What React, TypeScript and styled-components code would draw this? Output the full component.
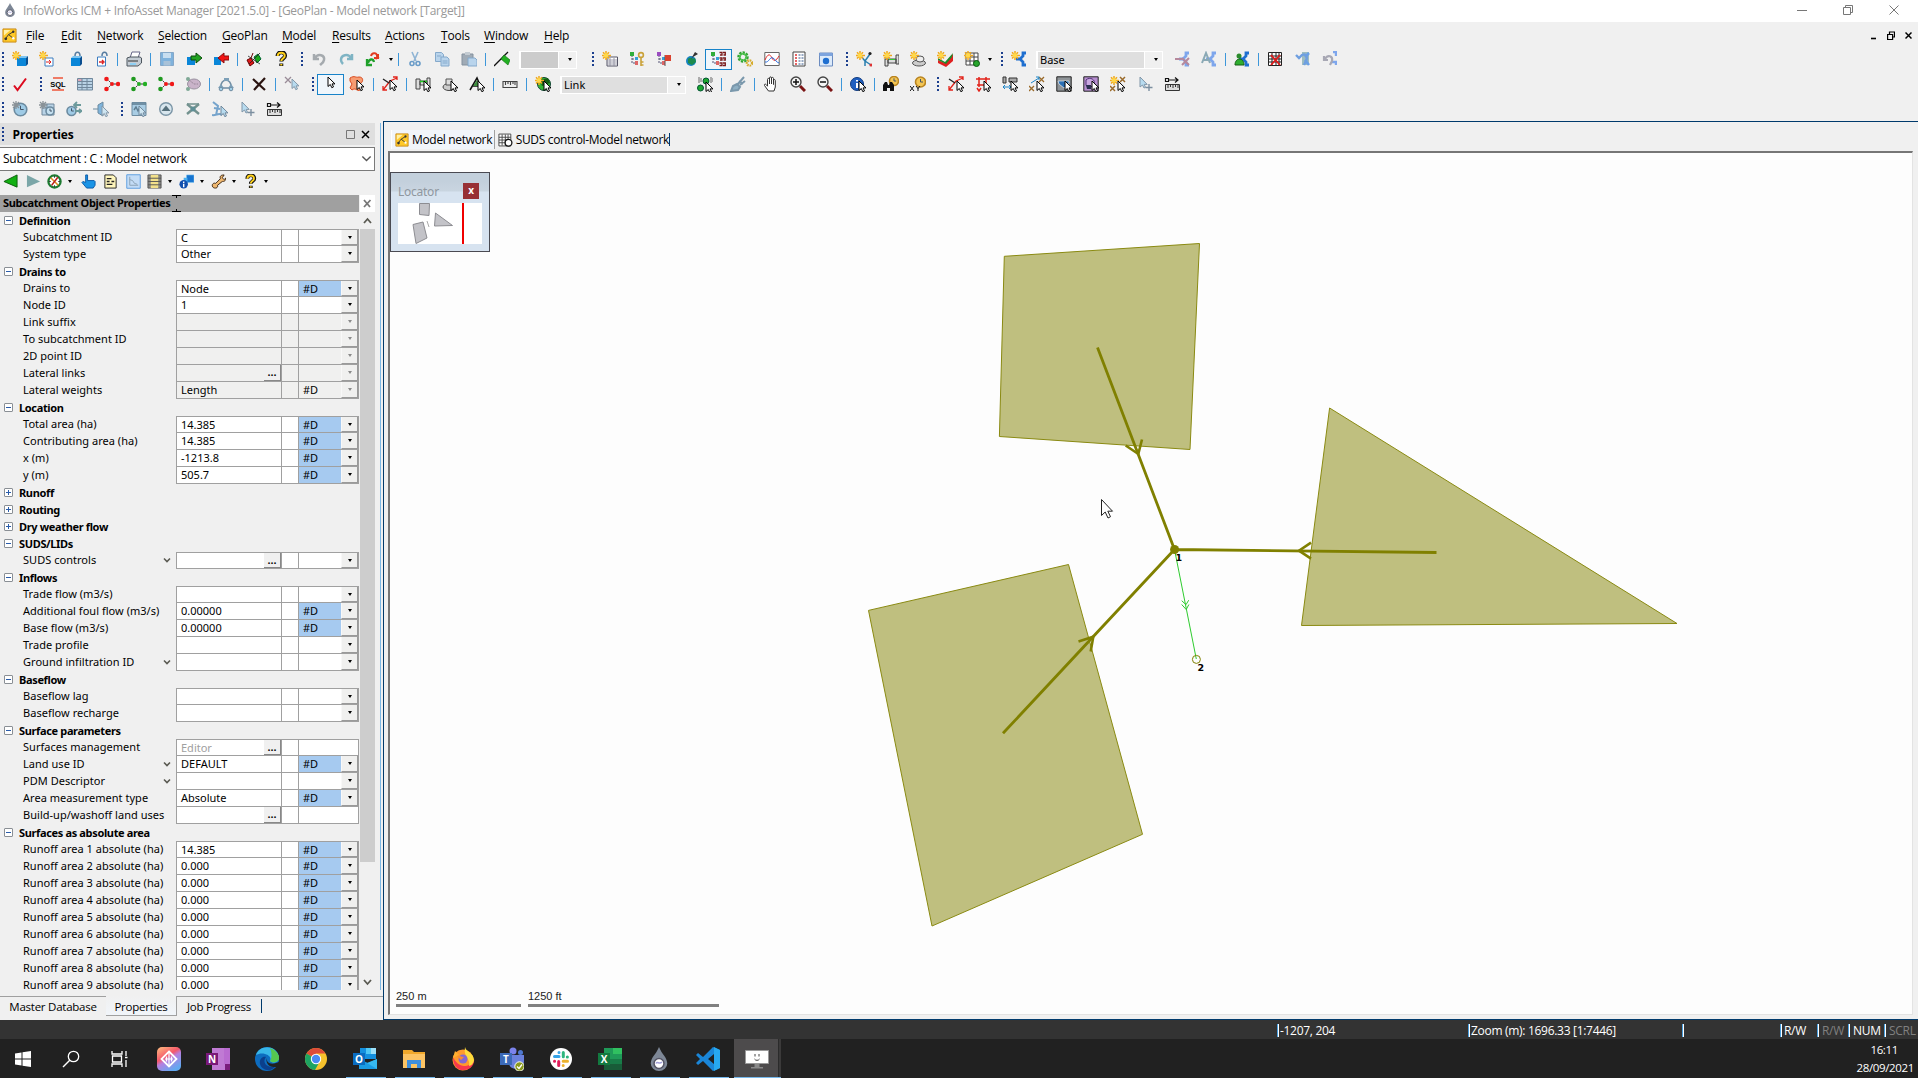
import React from "react";
import styled, { createGlobalStyle, css } from "styled-components";

const UI = `"Open Sans", "Noto Sans", sans-serif`;
const GRID = `"Noto Sans", "Open Sans", sans-serif`;

const Global = createGlobalStyle`
  * { box-sizing: border-box; }
  body { margin: 0; background: #f0f0f0; overflow: hidden; font-family: ${UI}; font-size: 12px; color: #000; }
`;

/* ---------- icon fragments, all on a 16 x 16 grid ---------- */

const Sun = () => (
  <g>
    <path d="M4 0v9M0 4.5h9M1 1.2l6 6.4M7 1.2L1 7.6" stroke="#f0a81c" strokeWidth="1.5" />
    <circle cx="4" cy="4.4" r="2.3" fill="#ffd84a" />
  </g>
);
const Arrow = ({ x = 8, y = 4, f = "#fff", s = "#000" }: { x?: number; y?: number; f?: string; s?: string }) => (
  <path d={`M${x} ${y}v9.5l2.3-2 1.5 3.2 1.7-.8-1.5-3h3z`} fill={f} stroke={s} strokeWidth="1" />
);
const Cube = ({ c = "#0a86d8" }: { c?: string }) => (
  <g>
    <path d="M5 7h9v8H5z" fill={c} />
    <path d="M5 7l2-2h9l-2 2z" fill="#7cc4f0" />
    <path d="M14 7l2-2v8l-2 2z" fill="#0a4f90" />
  </g>
);
const Tri = ({ a, b }: { a: string; b: string }) => (
  <g>
    <path d="M3 3l5 5h6M3 13l5-5" stroke="#333" fill="none" strokeDasharray="2 1" />
    <circle cx="2.5" cy="3" r="2.3" fill={a} />
    <circle cx="2.5" cy="13" r="2.3" fill={a} />
    <circle cx="8" cy="8" r="2" fill={b} />
    <circle cx="14" cy="8" r="2.2" fill={b} />
  </g>
);
const Net = ({ c = "#2f7fe0" }: { c?: string }) => (
  <path d="M15 2h-3v3l-3 3 3 3v3h3M9 8H5" stroke={c} strokeWidth="2.8" fill="none" />
);
const Tree = ({ c = "#2fae3c" }: { c?: string }) => (
  <g>
    <path d="M3 4v8h5M3 8h4" stroke="#557" fill="none" strokeDasharray="2 1" />
    <rect x="1" y="1" width="4" height="4" fill={c} />
    <rect x="6" y="6" width="3" height="3" fill="#37a0d8" />
    <rect x="6" y="10" width="3" height="4" fill="#d66" />
  </g>
);
const Lens = ({ plus }: { plus?: boolean }) => (
  <g>
    <path d="M10 10l5 5" stroke="#7a1414" strokeWidth="3" />
    <circle cx="6" cy="6" r="5" fill="#f4f4f4" stroke="#444" strokeWidth="1.4" />
    <path d={plus ? "M3 6h6M6 3v6" : "M3 6h6"} stroke="#111" strokeWidth="1.5" />
  </g>
);
const Clock = ({ f = "#9fcbe6", s = "#6c8ba0", x = 8.5, y = 8.5, r = 6.3 }: { f?: string; s?: string; x?: number; y?: number; r?: number }) => (
  <g>
    <circle cx={x} cy={y} r={r} fill={f} stroke={s} strokeWidth="1.6" />
    <path d={`M${x} ${y - r * 0.6}v${r * 0.6}h${r * 0.5}`} stroke="#456" fill="none" />
  </g>
);
const Ruler = () => (
  <g>
    <path d="M1.5 8.5h14v6h-14zM4 9v3M6.5 9v2M9 9v3M11.500 9v2M14 9v3" fill="#ddd" stroke="#333" />
    <path d="M1.5 2.500h3v3h-3zM5 4h9M11 1.500l3 2.500-3 2.500" fill="none" stroke="#111" strokeWidth="1.2" />
  </g>
);
const Question = ({ c = "#ffd21c" }: { c?: string }) => (
  <g fill="none">
    <path d="M4.500 5c0-5 8-5 7.500 0 0 2.500-3.700 2.500-3.700 5.500M8.300 12.500v2.500" stroke="#111" strokeWidth="4" />
    <path d="M4.700 5c0-4.500 7.500-4.500 7 0 0 2.500-3.400 2.500-3.400 5M8.300 13v1.500" stroke={c} strokeWidth="2" />
  </g>
);
const Lines = ({ c = "#e2231a" }: { c?: string }) => (
  <g stroke={c} fill="none" strokeWidth="1.300">
    <path d="M1 14L8 5l7-3M11 1h4v3M1 10v4h4" />
    <path d="M1 3l6 4" stroke="#222" />
  </g>
);

const icons: Record<string, React.ReactNode> = {
  newDb: <><Cube /><Sun /></>,
  newNet: <><path d="M6 7h8v8H6z" fill="#fff" stroke="#3b7cc0" /><path d="M7 11h5M10 9l2 2-2 2" stroke="#d22" fill="none" /><Sun /></>,
  openDb: <><Cube /><path d="M9 5c0-5 5-5 5 0" stroke="#557ba0" strokeWidth="1.500" fill="none" /></>,
  openNet: <><path d="M4.500 6h8v9h-8z" fill="#fff" stroke="#3b7cc0" /><path d="M6 11h4M9 9l2 2-2 2" stroke="#d22" strokeWidth="1.400" fill="none" /><path d="M9 5c0-5 5-5 5 0" stroke="#557ba0" strokeWidth="1.500" fill="none" /></>,
  print: <><path d="M4 7l2-6h8l-2 6z" fill="#fff" stroke="#668" /><path d="M1 7l3-1h10l1.500 1v5L12 15H1z" fill="#c4ccd4" stroke="#4d565e" /><path d="M2 10h10" stroke="#333" /><path d="M4 12h6v2H4z" fill="#8fd0f4" /></>,
  save: <><path d="M1.500 1.500h13v13h-13z" fill="#7fb2dc" stroke="#86a8c8" /><path d="M4 2h8v5H4z" fill="#c8def0" /><path d="M4.500 10h7v4.500h-7z" fill="#a9c2d8" /></>,
  commit: <><path d="M1 6h8v8H1z" fill="#0a86d8" /><path d="M5 5h5V2l6 5-6 5V9H5z" fill="#21a321" stroke="#0b4d0b" /></>,
  revert: <><path d="M1 6h7v8H1z" fill="#0a86d8" /><path d="M16 5h-5V2L5 7l6 5V9h5z" fill="#f01414" stroke="#8a0c0c" /></>,
  validate: <><path d="M1 9l4-2 3 5-4 3zM5 7l2-5" fill="#e01818" stroke="#600" /><path d="M8 6l4-3 3 5-4 4z" fill="#18a818" stroke="#063" /><path d="M3 13L14 2M2 5l12 8" stroke="#222" strokeWidth=".8" /></>,
  help: <Question />,
  undo: <path d="M3 3v5h5M4 7c3-5 10-3 9 2-.5 3-3 4-4 5" stroke="#a5aaae" strokeWidth="2.500" fill="none" />,
  redo: <path d="M14 3v5H9M13 7C10 2 3 4 3 9c0 2 1 3 2 4" stroke="#7fb4c4" strokeWidth="2.500" fill="none" />,
  redoAll: <><path d="M2 8v6h5M3 12c1-4 5-5 6-1" stroke="#1fa02a" strokeWidth="2.300" fill="none" /><path d="M6 5c1-4 7-4 6 2l2-1M9 7h4V3" stroke="#e23b20" strokeWidth="2" fill="none" /></>,
  cut: <><path d="M5 1l4 9M11 1L7 10" stroke="#8fb4d4" strokeWidth="1.600" /><circle cx="5" cy="12.500" r="2" fill="none" stroke="#6a9cc8" strokeWidth="1.600" /><circle cx="11" cy="12.500" r="2" fill="none" stroke="#6a9cc8" strokeWidth="1.600" /></>,
  copy: <g fill="#b9d4ec" stroke="#85a9cb"><path d="M1.500 1.500h6l2 2v7h-8z" /><path d="M7 6h6l2 2v7H7z" /><path d="M8.500 10h5M8.500 12h5M3 5h4" /></g>,
  paste: <><path d="M1 3h11v11H1z" fill="#a0abb6" stroke="#84919e" /><path d="M4 1h5v3H4z" fill="#c3cbd2" /><path d="M7 7h7l2 2v6H7z" fill="#b9d4ec" stroke="#85a9cb" /></>,
  flag: <><path d="M0 15L14 1" stroke="#111" strokeWidth="1.300" /><path d="M10 4l6 5-2 5-7-6z" fill="#22b022" stroke="#0c6b0c" strokeWidth=".6" /></>,
  newGrid: <><path d="M5 6h10.500v9H5z" fill="#fff" stroke="#556" /><path d="M5 9h10M5 11h10M5 13h10M8 7v8M12 7v8" stroke="#889" strokeWidth=".8" /><Sun /></>,
  treeKey: <><Tree /><circle cx="12" cy="4" r="2.400" fill="none" stroke="#caa23a" strokeWidth="1.600" /><path d="M12 6v9M12 11h2.500M12 14h2.500" stroke="#caa23a" strokeWidth="1.600" /></>,
  treeFlag: <><Tree c="#9a4cc0" /><path d="M9 15V4" stroke="#555" /><path d="M9 4h6v6H9z" fill="#d9432f" /></>,
  earth: <><circle cx="8" cy="10" r="5" fill="#1683c0" /><path d="M5 8c3-3 4 1 7-1l1 4-4 3-4-2z" fill="#1c8a4c" /><path d="M8 8l4-7 3 2-5 3z" fill="#333" /></>,
  treeNum: <><Tree /><path d="M9.500 1.500h2.500v2.500H10M9.500 7h2.500v2H10M9.500 12h2.500v2.500H9.500M13 1.500h2.300v2.500H13.500M13 7h2.300v2H13.500M13 12h2.300v2.500H13" stroke="#7a1a1a" strokeWidth="1.300" fill="none" /></>,
  gears: <><circle cx="6" cy="6" r="4" fill="none" stroke="#31a431" strokeWidth="3.400" strokeDasharray="2 1" /><circle cx="6" cy="6" r="3.300" fill="none" stroke="#4cc04c" strokeWidth="1.600" /><circle cx="12.500" cy="12" r="2.600" fill="none" stroke="#d7ac2c" strokeWidth="2.400" strokeDasharray="1.600 .8" /></>,
  chart: <><path d="M.8 1.500h14.400v13H.8z" fill="#fff" stroke="#666" /><path d="M1 9c3-7 5-6 7-2s4 3 7-2" stroke="#e02a2a" fill="none" /><path d="M1 11c4 1 5-6 8-4s3 4 6 5" stroke="#2a6ee0" fill="none" /></>,
  list: <><path d="M2 1h12v14H2z" fill="#fff" stroke="#444" /><path d="M4 4h2M4 7h2M4 10h2M4 13h2" stroke="#d33" strokeWidth="1.600" /><path d="M7.500 4H13M7.500 7H13M7.500 10H13M7.500 13H13" stroke="#358" strokeDasharray="2 1" /></>,
  viewer: <><path d="M1.500 2h13v13h-13z" fill="#dceafa" stroke="#6c8cc0" /><path d="M1.500 2h13v3h-13z" fill="#7da4de" /><circle cx="8" cy="10" r="3.200" fill="#1f6fd0" /></>,
  newLink: <><path d="M4 4l5 6 5-7M9 10v5M9 10l6 4" stroke="#2a7fb0" strokeWidth="1.500" fill="none" /><circle cx="14" cy="2.500" r="1.600" fill="#222" /><circle cx="15" cy="14" r="1.600" fill="#d33" /><Sun /></>,
  newPipe: <><path d="M2 8h3v7H2zM13 4h3v9h-3zM5 8h8v4H5z" fill="#ddd" stroke="#444" /><path d="M6 8.500h6" stroke="#3c3" /><Sun /></>,
  newMan: <><ellipse cx="9" cy="12" rx="6.500" ry="3" fill="#ccc" stroke="#555" /><ellipse cx="10" cy="8" rx="4" ry="3" fill="#eee" stroke="#555" /><Sun /></>,
  newPoly: <><path d="M1 9l7 3 8-9v7l-7 6-8-4z" fill="#e02020" /><path d="M1 7l7 4 8-9-1 4-6 7-8-4z" fill="#1f8a2a" /><Sun /></>,
  newTable: <><path d="M2 2h12v12H2zM2 6h12M2 10h12M6 2v12M10 2v12" fill="#fff" stroke="#444" /><circle cx="12.500" cy="12.500" r="3" fill="#27a52c" stroke="#0b5c10" /><Sun /></>,
  scen: <><Net c="#1f6fd0" /><Sun /></>,
  scenDel: <><Net c="#7ea6ec" /><path d="M1 8h7M8 7l7 7M15 7l-7 7" stroke="#b5889c" strokeWidth="2" /></>,
  scenA: <><Net c="#7ea6ec" /><path d="M1 12L5 2l4 10M2.500 9h5" stroke="#8aa9b5" strokeWidth="2" fill="none" /></>,
  scenUser: <><Net c="#1f6fd0" /><circle cx="5" cy="5" r="2.500" fill="#2c8c2c" /><path d="M1 14c0-8 9-8 9 0z" fill="#2fae2f" stroke="#145c14" /></>,
  gridDel: <><path d="M1.500 1.500h13v13h-13zM1.500 5h13M1.500 8h13M1.500 11h13M5 2v12M9 2v12M12 2v12" fill="#fff" stroke="#222" /><path d="M4 4l9 10M13 4L4 14" stroke="#e01818" strokeWidth="1.800" /></>,
  scenUndo: <><path d="M8 1h7v13H8z" fill="#9dbcc0" /><path d="M15 2l-4 4M11 9l4 5" stroke="#6aa0e8" strokeWidth="2.600" /><path d="M2 4l3 3 3-3c4-2 6 2 4 6l-2 4" stroke="#6f9fe0" strokeWidth="2.400" fill="none" /></>,
  scenUndo2: <><path d="M12 1h3v4M11 11h4v3" stroke="#7ea6ec" strokeWidth="2.400" fill="none" /><path d="M3 5v4h4M4 8c3-5 8-3 7 2l-2 4" stroke="#a8a8b4" strokeWidth="2.200" fill="none" /></>,
  check: <path d="M2 9.500l3.500 4.500L14 2.500" stroke="#dc0a1e" strokeWidth="2" fill="none" />,
  sql: <><path d="M3 2h10M2 14h12" stroke="#ef7b66" strokeWidth="2" /><text x="8" y="11" fontSize="7.500" fontWeight="700" textAnchor="middle" fontFamily="Liberation Sans, sans-serif" fill="#000">SQL</text></>,
  sheet: <><path d="M1 2h15v12H1z" fill="#b9d3e6" /><path d="M1 2h4v3H1z" fill="#d9a8b8" /><path d="M.5 2.500h15v11.500h-15zM.5 5.500h15M.5 8.500h15M.5 11.500h15M5 2v12M10 2v12" fill="none" stroke="#71889c" /></>,
  triR: <Tri a="#f01818" b="#f01818" />,
  triG: <Tri a="#1f9a1f" b="#23b023" />,
  triM: <Tri a="#1f9a1f" b="#f01818" />,
  cloud: <><ellipse cx="9" cy="8" rx="6.500" ry="5" fill="#c9b3c9" stroke="#9a92a0" /><circle cx="3" cy="3" r="2" fill="#7fa896" /><circle cx="3" cy="13" r="2" fill="#7fa896" /><path d="M4 4l5 4h4" stroke="#998899" strokeDasharray="2 1" fill="none" /></>,
  loop: <><path d="M3 11c-1-9 11-9 10 0M3 12h10" stroke="#6f8ca2" strokeWidth="1.500" fill="none" /><path d="M6 2h5v3H6zM0 12l3-4 3 4zM10 12l3-4 3 4z" fill="#7da0b8" /><circle cx="3" cy="13" r="1.800" fill="#9fd0ea" stroke="#6f8ca2" /><circle cx="13" cy="13" r="1.800" fill="#9fd0ea" stroke="#6f8ca2" /></>,
  del: <path d="M2 3l12 11M14 2L3 14" stroke="#2a1410" strokeWidth="2.200" />,
  delSel: <><path d="M1 1l6 6M7 1L1 7" stroke="#9a8c98" strokeWidth="1.300" /><Arrow x={8} y={3} f="#b8dcf0" s="#8598a8" /></>,
  select: <Arrow x={6} y={1} />,
  selPoly: <><path d="M1 2c5-3 5 0 9-1 5 0 4 5 2 6s2 5-1 7-4-3-8 0l-2-2 2-4-2-3z" fill="#f79c72" stroke="#d8481c" /><Arrow x={8} y={4} /></>,
  selLine: <><Lines /><Arrow x={8} y={4} /></>,
  selPipe: <><path d="M1 3h4v10H1zM12 2h3v9h-3zM5 5h7v4H5z" fill="#ddd" stroke="#444" /><path d="M5 5.500h7" stroke="#2c2" strokeWidth="1.500" /><Arrow x={9} y={5} /></>,
  selMan: <><ellipse cx="7" cy="11" rx="6" ry="3.500" fill="#ccc" stroke="#444" /><path d="M4 3h6v6H4z" fill="#ddd" stroke="#555" /><Arrow x={9} y={5} /></>,
  selTri: <><path d="M1 14L8 2l5 12M4 10h7" fill="none" stroke="#111" strokeWidth="1.500" /><path d="M4 10L8 4l2 6z" fill="#3c8c3c" /><Arrow x={9} y={5} /></>,
  measure: <path d="M1 5.500h14v6H1zM3.500 6v3M6 6v2M8.500 6v3M11 6v2M13 6v3" fill="#eee" stroke="#444" strokeWidth="1.100" />,
  theme: <><circle cx="9" cy="8" r="6.500" fill="#35b835" stroke="#114433" /><path d="M5 4l8-2 2 5-8 3z" fill="#145c14" /><Sun /><Arrow x={9} y={5} /></>,
  trace: <><circle cx="3.500" cy="12" r="3" fill="#1fa82f" stroke="#053" /><circle cx="9" cy="5" r="3" fill="#1fa82f" stroke="#053" /><path d="M2 1v6M4 2v4M14 1v6M16 2v4" stroke="#444" strokeWidth=".8" /><Arrow x={9} y={6} /></>,
  brush: <path d="M1 15l2-5 4-2 3 3-2 3zM8 8l6-7M10 9l5-4M9 5l4 3" fill="#8fb0c4" stroke="#7a98ac" strokeWidth="2" />,
  hand: <path d="M5.500 15L1.500 9.500c-.5-1.500 1-2 2-.5l1 1.200V3.500c0-1.500 1.800-1.500 2 0V8 2c0-1.500 2-1.500 2 0v6-5.500c0-1.500 2-1.500 2 0V8.500 4.500c0-1.300 1.800-1.300 1.800 0V11l-1.300 4z" fill="#fff" stroke="#333" />,
  zin: <Lens plus />,
  zout: <Lens />,
  info: <><circle cx="7" cy="8" r="6.500" fill="#1f5fc0" stroke="#123c80" /><path d="M7 4v1.500M7 7v5" stroke="#fff" strokeWidth="2" /><Arrow x={9} y={5} /></>,
  findClock: <><Clock f="#f4c552" s="#b98420" x={11} y={5} r={4.500} /><path d="M0 15V9l2-3h2l1 3h1l1-3h2l2 3v6H7v-3H4v3z" fill="#111" /></>,
  xyClock: <><Clock f="#f4c552" s="#b98420" x={10.500} y={6} r={5} /><path d="M0 10l4 5M4 10l-4 5M6 10l2 2.500L10 10M8 12v3" stroke="#111" fill="none" /></>,
  eLine: <><Lines /><Arrow x={9} y={5} /></>,
  eGrid: <><path d="M1 3h14M4 1v10M11 1v9M2 9h9M2 12l2 3 2-3" stroke="#e2231a" strokeWidth="1.500" fill="none" /><Arrow x={9} y={5} /></>,
  ePipe: <><path d="M1 1h3v6H1zM7 2h8v4H7z" fill="#aaa" stroke="#333" /><path d="M1 11h9M3 9l-2 2 2 2M7 9l2 2-2 2" stroke="#1b84c8" fill="none" /><Arrow x={9} y={5} /></>,
  eNode: <><path d="M0 10l5 5M5 10l-5 5M10 1l5 5M15 1l-5 5" stroke="#9a6a2a" strokeWidth="1.300" /><path d="M2 7l8-5M7 1h3v3" stroke="#1b84c8" fill="none" /><Arrow x={8} y={5} /></>,
  eSec: <><path d="M.8.800h14.400v14.400H.8z" fill="#8f9498" stroke="#222" /><path d="M2 5h11v2l-5 5-5-4z" fill="#2a6fb4" stroke="#fff" strokeWidth=".6" /><Arrow x={9} y={5} /></>,
  eSec2: <><path d="M.8.800h14.400v14.400H.8z" fill="#b78fd0" stroke="#222" /><path d="M3 4c4-4 10 0 8 4s-7 4-8 1z" fill="#c9a8e0" stroke="#52307a" /><path d="M3 9h5v4H4z" fill="#2b2f50" /><Arrow x={9} y={5} /></>,
  eNew: <><path d="M0 10l5 5M5 10l-5 5M10 1l5 5M15 1l-5 5" stroke="#9a6a2a" strokeWidth="1.500" /><Sun /><Arrow x={8} y={5} /></>,
  movePt: <><path d="M3 1v10l2.500-2 1.500 3 1.500-.6-1.300-3h3z" fill="#b8dcf0" stroke="#8196a8" /><path d="M12 8v7M8.500 11.500h7" stroke="#7c8fa0" strokeWidth="1.400" /></>,
  ruler: <Ruler />,
  clockA: <><Clock /><path d="M0 4h8M4 0v8M1 1l6 6M7 1L1 7" stroke="#8a9298" strokeWidth="1.300" /></>,
  clockB: <><path d="M3 3h12v11H3z" fill="#b9d3e6" stroke="#71889c" /><path d="M3 7h12M8 3v11" stroke="#71889c" /><Clock x={11} y={10} r={4} f="#c5e0f0" /><path d="M0 4h8M4 0v8M1 1l6 6M7 1L1 7" stroke="#8a9298" strokeWidth="1.300" /></>,
  clockC: <><Clock x={5.500} y={10} r={4.500} /><path d="M8 4h7M11 1L8 4l3 3M9 10h7M13 8l2.500 2-2.500 2" stroke="#6c9a9c" strokeWidth="1.800" fill="none" /></>,
  clockD: <><path d="M0 8h5V4l5-3v14l-5-3V8" fill="#7fb4dc" stroke="#6c8ba0" /><Arrow x={9} y={5} f="#cfe6f2" s="#8598a8" /></>,
  winSel: <><path d="M1 1.500h14v13H1z" fill="#a9cde4" stroke="#6c8ba0" /><path d="M1 3h14M3 9l2-3 2 4 2-4" stroke="#5d7c90" fill="none" strokeWidth="1.400" /><Arrow x={8} y={5} f="#cfe6f2" s="#71889c" /></>,
  up: <><circle cx="8" cy="8" r="6.300" fill="#d8e6ee" stroke="#7b95a6" strokeWidth="1.400" /><path d="M3.500 10L8 4.500l4.500 5.500z" fill="#56707c" /></>,
  junction: <><path d="M2 3l12 10M14 3L2 13" stroke="#73928f" strokeWidth="2.400" /><path d="M2 3h12" stroke="#73928f" strokeWidth="1.500" /><circle cx="8" cy="8" r="2.500" fill="#5f8f96" /></>,
  flowSel: <><path d="M1 1l5 4-2 9M0 14c4 1 7-3 10 0M2 7l6 1" stroke="#76a4cc" strokeWidth="2" fill="none" /><Arrow x={9} y={5} f="#b8dcf0" s="#71889c" /></>,
  geoplan: <><path d="M1 1h14v14H1z" fill="#ffc928" stroke="#c98a1a" /><path d="M2 2h7l-7 6z" fill="#fff0a8" /><path d="M4 11l3-4 5-3M7 7l5 4" stroke="#333" fill="none" /><circle cx="4" cy="11.500" r="1.500" fill="#333" /><circle cx="12" cy="4" r="1.300" fill="#333" /><circle cx="12" cy="11" r="1.300" fill="#fff" /></>,
  sudsGrid: <><path d="M1 1.500h13v13H1zM1 5h13M1 8h13M1 11h13M4.500 2v12M8 2v12M11 2v12" fill="#fff" stroke="#444" /><circle cx="11.500" cy="11" r="3.700" fill="#fff" stroke="#111" strokeWidth="1.400" /></>,
  drop: <><path d="M8 0C6 5 2.500 7 2.500 11a5.500 5 0 0 0 11 0C13.500 7 10 5 8 0z" fill="#7d8796" /><circle cx="8" cy="11" r="3.300" fill="#fff" stroke="#556" /><path d="M6 11c1-2 2 1 4-1" stroke="#a3a0d8" fill="none" /></>,
  prev: <path d="M15 1v13L1 8z" fill="#12b012" stroke="#0b5d0b" />,
  next: <path d="M1 1v13l14-6z" fill="#7ba6a8" />,
  compass: <><circle cx="8" cy="8" r="6.500" fill="#fff" stroke="#1c7a30" strokeWidth="2.400" /><path d="M4 4l8 8" stroke="#e08a1c" strokeWidth="1.600" /><path d="M11.500 3.500L5 12" stroke="#b22" strokeWidth="1.600" /><path d="M8 2v2M8 12v2M2 8h2M12 8h2" stroke="#333" /></>,
  point: <path d="M5 1h2v6h7l1 1v4l-2 3H6l-5-6 1-1 3 1z" fill="#1a94e6" stroke="#0a5aa8" />,
  notes: <><path d="M2 1h9l3 3v11H2z" fill="#fff6bc" stroke="#222" /><path d="M4 5h5M4 8h3M9 8h3M4 11h6" stroke="#222" strokeWidth="1.400" /></>,
  graph: <><path d="M.8.800h14.400v14.400H.8z" fill="#c3dcf6" stroke="#5b9de0" /><path d="M4 3v9h9M4 6l3 1 2 3 3 1" stroke="#8aa0b4" fill="none" /></>,
  film: <><path d="M1 1h14v14H1z" fill="#8a8a86" stroke="#555" /><path d="M4 1h8v14H4z" fill="#f2e08a" /><path d="M1 4.500h14M1 8h14M1 11.500h14" stroke="#555" /></>,
  infoCube: <><path d="M8 1h8v8H8z" fill="#1674d0" stroke="#7cc4f0" strokeWidth=".6" /><path d="M5 4h4v6H5z" fill="#4ab0f0" /><circle cx="5" cy="11" r="4.500" fill="#114fae" /><path d="M5 8v1.500M5 10.500v3.500" stroke="#fff" strokeWidth="1.500" /></>,
  wrench: <path d="M2 14c-2-3 1-5 3-4l5-5c-1-3 1-4 4-4l-2 3 2 2 2-2c0 4-3 4-4 4l-5 4c1 3-3 4-5 2z" fill="#f0b870" stroke="#3a2410" />,
};

/* ---------- shared toolbar parts ---------- */

const Slot = styled.div<{ $on?: boolean; $w?: number }>`
  width: ${(p) => p.$w ?? 27}px;
  height: 21px;
  flex: none;
  display: flex;
  align-items: center;
  justify-content: center;
  padding-bottom: 1px;
  ${(p) => p.$on && css`background: #f0f6fb; border: 1px solid #1883c9;`}
`;
const Grip = styled.i<{ $w: number }>`
  width: ${(p) => p.$w}px;
  height: 15px;
  flex: none;
  background: repeating-linear-gradient(#1c3f8e 0 2px, transparent 2px 4px) right 3px top / 2px 15px no-repeat;
`;
const Sep = styled.i`
  width: 6px;
  height: 13px;
  flex: none;
  background: linear-gradient(#3d97da, #3d97da) center / 1px 13px no-repeat;
`;
const Caret = styled.i<{ $c?: string; $w?: number }>`
  width: ${(p) => p.$w ?? 9}px;
  flex: none;
  display: flex;
  justify-content: center;
  &::after {
    content: "";
    border: 2.5px solid transparent;
    border-top: 3px solid ${(p) => p.$c ?? "#000"};
    border-bottom: 0;
  }
`;
const Combo = styled.div<{ $w: number; $l: number; $r: number; $fill: string }>`
  width: ${(p) => p.$w}px;
  height: 18px;
  margin: 0 ${(p) => p.$r}px 0 ${(p) => p.$l}px;
  flex: none;
  display: flex;
  align-items: center;
  border: 1px solid #fff;
  background: #f0f0f0;
  span {
    flex: 1;
    height: 16px;
    padding-left: 2px;
    margin-right: 4px;
    line-height: 16px;
    font-size: 11px;
    border: 1px solid #fff;
    border-width: 0 1px;
    font-family: ${GRID};
    background: ${(p) => p.$fill};
  }
`;

type Item = string | ["grip" | "arrow", number] | ["combo", number, number, number, string, string] | ["on", string];

const Icon = ({ name, size = 16 }: { name: string; size?: number }) => (
  <svg width={size} height={size} viewBox="0 0 16 16" aria-hidden>{icons[name]}</svg>
);

const ToolRow = styled.div`
  height: 25px;
  display: flex;
  align-items: center;
`;
const Toolbar = ({ items }: { items: Item[] }) => (
  <ToolRow>
    {items.map((it, i) => {
      if (it === "|") return <Sep key={i} />;
      if (typeof it === "string") return <Slot key={i}><Icon name={it} /></Slot>;
      if (it[0] === "grip") return <Grip key={i} $w={it[1]} />;
      if (it[0] === "arrow") return <Caret key={i} $w={it[1]} />;
      if (it[0] === "on") return <Slot key={i} $on><Icon name={it[1]} /></Slot>;
      if (it[0] === "combo")
        return <Combo key={i} $l={it[1]} $w={it[2]} $r={it[3]} $fill={it[4]}><span>{it[5]}</span><Caret $w={13} /></Combo>;
      return null;
    })}
  </ToolRow>
);

const row1: Item[] = [["grip", 6.5], "newDb", "newNet", "openDb", "openNet", "|", "print", "|", "save", "commit", "revert", "|", "validate", "help",
  ["grip", 11], "undo", "redo", "redoAll", ["arrow", 9], "|", "cut", "copy", "paste", "|", "flag", ["combo", 3.5, 58, 0, "#cccccc", ""],
  ["grip", 19.5], "newGrid", "treeKey", "treeFlag", "earth", ["on", "treeNum"], "gears", "chart", "list", "viewer",
  ["grip", 11], "newLink", "newPipe", "newMan", "newPoly", "newTable", ["arrow", 9], ["grip", 11], "scen",
  ["combo", 3.5, 127, 5, "#dfdfdf", "Base"], "scenDel", "scenA", "|", "scenUser", "|", "gridDel", "scenUndo", "scenUndo2"];
const row2: Item[] = [["grip", 6.5], "check", ["grip", 11], "sql", "sheet", "triR", "triG", "triM", "cloud", "|", "loop", "|", "del", "|", "delSel",
  ["grip", 11], ["on", "select"], "selPoly", "|", "selLine", "|", "selPipe", "selMan", "selTri", "|", "measure", "|", "theme",
  ["combo", 3.5, 126, 5, "#dfdfdf", "Link"], "trace", "|", "brush", "|", "hand", "zin", "zout", "|", "info", "|", "findClock", "xyClock",
  ["grip", 11], "eLine", "eGrid", "ePipe", "eNode", "eSec", "eSec2", "eNew", "movePt", "ruler"];
const row3: Item[] = [["grip", 6.5], "clockA", "clockB", "clockC", "clockD", ["grip", 11], "winSel", "up", "junction", "flowSel", "movePt", "ruler"];

/* ---------- frame ---------- */

const Screen = styled.div`
  width: 1918px;
  height: 1078px;
  display: flex;
  flex-direction: column;
  background: #f0f0f0;
`;
const TitleBar = styled.header`
  height: 22px;
  background: #fff;
  color: #999;
  display: flex;
  align-items: center;
  padding: 0 19px 2px 3px;
  font-size: 12px;
  letter-spacing: -0.28px;
  white-space: nowrap;
  span { flex: 1; padding-left: 6px; }
`;
const WinButtons = styled.div<{ $gap: number }>`
  display: flex;
  align-items: center;
  gap: ${(p) => p.$gap}px;
`;
const MenuBar = styled.nav`
  height: 25px;
  display: flex;
  align-items: center;
  gap: 16px;
  padding: 1px 6px 0 2px;
  font-size: 12px;
  letter-spacing: -0.2px;
  > svg { margin-right: -7px; }
  > div { margin-left: auto; }
`;
const MenuItem = styled.a<{ $w: number }>`
  width: ${(p) => p.$w}px;
  white-space: nowrap;
  u { text-underline-offset: 2px; }
`;
const menus: [string, number][] = [["File", 19], ["Edit", 20], ["Network", 45], ["Selection", 48], ["GeoPlan", 44], ["Model", 34], ["Results", 37], ["Actions", 40], ["Tools", 27], ["Window", 44], ["Help", 30]];

const Tools = styled.div`height: 74px;`;
const Work = styled.main`
  height: 899px;
  display: flex;
`;

/* ---------- properties panel ---------- */

const Side = styled.section`
  width: 383px;
  padding-top: 2px;
  display: flex;
  flex-direction: column;
`;
const SideMain = styled.div`
  height: 867px;
  width: 381px;
  padding-right: 5px;
  border-right: 1px solid #7cb8e6;
  display: flex;
  flex-direction: column;
`;
const PanelHead = styled.div`
  height: 22px;
  flex: none;
  background: #dfdfdf;
  display: flex;
  align-items: center;
  padding-right: 5px;
  b { flex: 1; padding-left: 6px; font-size: 12px; letter-spacing: -0.15px; }
  svg { margin-left: 6px; }
`;
const ObjectSelect = styled.div`
  height: 24px;
  flex: none;
  margin-top: 2px;
  border: 1px solid #7a7a7a;
  border-left: 0;
  background: #fff;
  display: flex;
  align-items: center;
  justify-content: space-between;
  padding: 0 2px 1px 3px;
  font-size: 12px;
  letter-spacing: -0.23px;
`;
const PanelTools = styled.div`
  height: 24px;
  flex: none;
  display: flex;
  align-items: center;
  padding: 0 0 3px 3px;
`;
const ToolGap = styled.div<{ $r: number }>`
  display: flex;
  align-items: center;
  margin-right: ${(p) => p.$r}px;
`;
const SubHead = styled.div`
  height: 17px;
  flex: none;
  display: flex;
  b {
    width: 359px;
    padding-left: 3px;
    display: flex;
    background: #a0a0a0;
    font: 700 11px/16px ${GRID};
    letter-spacing: -0.35px;
    white-space: nowrap;
  }
  span {
    margin-left: 1px;
    width: 15px;
    background: #fff;
    display: flex;
    align-items: center;
    justify-content: center;
  }
`;
const IBeam = styled.i`
  width: 9px;
  height: 17px;
  margin: 0 178px 0 auto;
  background: linear-gradient(#000, #000) top / 9px 1px no-repeat, linear-gradient(#000, #000) bottom / 9px 1px no-repeat,
    linear-gradient(#000, #000) top / 1px 3px no-repeat, linear-gradient(#000, #000) bottom / 1px 3px no-repeat;
`;
const GridWrap = styled.div`
  height: 780px;
  display: flex;
  overflow: hidden;
`;
const Rows = styled.div`width: 359px; flex: none;`;
const Section = styled.div`
  height: 17px;
  display: flex;
  align-items: center;
  padding: 0 0 1px 4px;
  font: 700 11px/15px ${GRID};
  letter-spacing: -0.35px;
  i {
    width: 9px; height: 9px;
    margin: 1px 6px 0 0;
    border: 1px solid #8a8f95;
    border-radius: 1px;
    background:
      linear-gradient(#2a5caa, #2a5caa) center / 5px 1px no-repeat, #fff;
  }
  i[data-closed="true"] {
    background:
      linear-gradient(#2a5caa, #2a5caa) center / 5px 1px no-repeat,
      linear-gradient(#2a5caa, #2a5caa) center / 1px 5px no-repeat, #fff;
  }
`;
const Row = styled.div`
  height: 17px;
  display: flex;
  font: 11px/14px ${GRID};
  white-space: nowrap;
`;
const Name = styled.label`
  width: 176px;
  padding: 0 5px 2px 23px;
  display: flex;
  justify-content: space-between;
  align-items: center;
  line-height: 15px;
  letter-spacing: 0.03px;
`;
/* The first line of a group is one pixel shorter; the lines under it move up to meet it. */
const Cells = styled.div<{ $off?: boolean; $first?: boolean; $last?: boolean }>`
  width: 183px;
  height: ${(p) => (p.$first ? 16 : 17) + (p.$last ? 1 : 0)}px;
  margin-top: ${(p) => (p.$first ? 0 : -1)}px;
  line-height: ${(p) => (p.$first ? 16 : 15)}px;
  flex: none;
  display: flex;
  border: 1px solid #a0a0a0;
  border-bottom-width: ${(p) => (p.$last ? 1 : 0)}px;
  background: ${(p) => (p.$off ? "#f0f0ef" : "#fff")};
`;
const Value = styled.span<{ $ph?: boolean }>`
  width: 105px;
  padding-left: 4px;
  border-right: 1px solid #a0a0a0;
  display: flex;
  justify-content: space-between;
  ${(p) => p.$ph && css`color: #a0a0a0;`}
`;
const More = styled.b`
  width: 17px;
  background: #f0f0f0;
  border-right: 1px solid #888;
  border-bottom: 1px solid #888;
  color: #000;
  text-align: center;
  line-height: 14px;
  font-weight: 600;
`;
const Gap = styled.span`width: 17px; border-right: 1px solid #a0a0a0;`;
const Flag = styled.span<{ $hl?: boolean }>`
  width: 42px;
  padding-left: 4px;
  ${(p) => p.$hl && css`background: #a6caf0;`}
`;
const Drop = styled.span`
  width: 17px;
  display: flex;
  align-items: center;
  justify-content: center;
  background: #f0f0ef;
  border-left: 1px solid #f8f8f8;
  border-bottom: 1px solid #9a9a9a;
  border-right: 1px solid #9a9a9a;
`;
const Scroll = styled.div`
  width: 15px;
  margin-left: 1px;
  display: flex;
  flex-direction: column;
  align-items: center;
  background: #f0f0f0;
  i { width: 15px; height: 633px; background: #cdcdcd; }
  svg { flex: none; }
  div { flex: 1; }
`;
const Chevron = ({ w = 8, t = 1.6, c = "#5a5a52" }: { w?: number; t?: number; c?: string }) => (
  <svg width={w} height={w} viewBox="0 0 8 8"><path d="M1 2.500l3 3 3-3" stroke={c} strokeWidth={t} fill="none" /></svg>
);

const TabsLine = styled.div`
  height: 30px;
  padding-top: 6px;
  display: flex;
  background: linear-gradient(#a0a0a0, #a0a0a0) 0 6px / 100% 1px no-repeat;
`;
const BottomTab = styled.div<{ $w: number; $on?: boolean }>`
  width: ${(p) => p.$w}px;
  height: 20px;
  text-align: center;
  font-size: 11.500px;
  letter-spacing: -0.25px;
  line-height: 21px;
  white-space: nowrap;
  ${(p) => p.$on && css`background: linear-gradient(#f0f0f0, #f1f5fa); border-right: 1px solid #a0a0a0; border-bottom: 1px solid #a0a0a0;`}
`;
const Tick = styled.i<{ $h: number; $t?: number }>`
  width: 1px;
  height: ${(p) => p.$h}px;
  margin-top: ${(p) => p.$t ?? 0}px;
  background: #003a6c;
`;

type R = [name: string, value?: string, flag?: string, opt?: string];
/* opt letters: o = disabled, m = "..." button, x = no drop-down, c = chevron beside the name, p = placeholder */
const sections: { title: string; closed?: boolean; rows?: R[] }[] = [
  { title: "Definition", rows: [["Subcatchment ID", "C"], ["System type", "Other"]] },
  { title: "Drains to", rows: [["Drains to", "Node", "#D"], ["Node ID", "1"], ["Link suffix", "", "", "o"], ["To subcatchment ID", "", "", "o"], ["2D point ID", "", "", "o"], ["Lateral links", "", "", "om"], ["Lateral weights", "Length", "#D", "o"]] },
  { title: "Location", rows: [["Total area (ha)", "14.385", "#D"], ["Contributing area (ha)", "14.385", "#D"], ["x (m)", "-1213.8", "#D"], ["y (m)", "505.7", "#D"]] },
  { title: "Runoff", closed: true },
  { title: "Routing", closed: true },
  { title: "Dry weather flow", closed: true },
  { title: "SUDS/LIDs", rows: [["SUDS controls", "", "", "mc"]] },
  { title: "Inflows", rows: [["Trade flow (m3/s)"], ["Additional foul flow (m3/s)", "0.00000", "#D"], ["Base flow (m3/s)", "0.00000", "#D"], ["Trade profile"], ["Ground infiltration ID", "", "", "c"]] },
  { title: "Baseflow", rows: [["Baseflow lag"], ["Baseflow recharge"]] },
  { title: "Surface parameters", rows: [["Surfaces management", "Editor", "", "mxp"], ["Land use ID", "DEFAULT", "#D", "c"], ["PDM Descriptor", "", "", "c"], ["Area measurement type", "Absolute", "#D"], ["Build-up/washoff land uses", "", "", "mx"]] },
  { title: "Surfaces as absolute area", rows: Array.from({ length: 9 }, (_, i): R => [`Runoff area ${i + 1} absolute (ha)`, i ? "0.000" : "14.385", "#D"]) },
];

const Property = ({ r: [name, value = "", flag = "", opt = ""], first, last }: { r: R; first: boolean; last: boolean }) => (
  <Row>
    <Name>{name}{opt.includes("c") && <Chevron />}</Name>
    <Cells $off={opt.includes("o")} $first={first} $last={last}>
      <Value $ph={opt.includes("p")}>{value}<span />{opt.includes("m") && <More>...</More>}</Value>
      <Gap />
      <Flag $hl={!!flag && !opt.includes("o")}>{flag}</Flag>
      {!opt.includes("x") && <Drop><Caret $c={opt.includes("o") ? "#8a8a8a" : "#000"} /></Drop>}
    </Cells>
  </Row>
);

/* ---------- map window ---------- */

const Mdi = styled.section`
  flex: 1;
  border-left: 1px solid #003a6c;
  border-top: 1px solid #003a6c;
  border-bottom: 1px solid #003a6c;
  padding: 0 5px 4px 4px;
  display: flex;
  flex-direction: column;
`;
const DocTabs = styled.div`
  height: 29px;
  padding: 8px 0 0 3px;
  display: flex;
`;
const DocTab = styled.div<{ $on?: boolean; $w: number; $gap: number }>`
  height: 19px;
  width: ${(p) => p.$w}px;
  display: flex;
  align-items: center;
  gap: ${(p) => p.$gap}px;
  padding-left: 3px;
  white-space: nowrap;
  font-size: 12px;
  letter-spacing: -0.32px;
  ${(p) => p.$on && css`background: #f1f5fa; border-right: 1px solid #a0a0a0; border-left: 1px solid #fff;`}
`;
const Canvas = styled.div`
  position: relative;
  flex: 1;
  background: #fdfdfd;
  border: 1px solid #e3e3e3;
  border-left: 2px solid #767676;
  border-top: 2px solid #767676;
  > svg { display: block; }
`;
const Locator = styled.div`
  position: absolute;
  left: 0;
  top: 19px;
  width: 100px;
  height: 80px;
  border: 1px solid #4a4a52;
  background: linear-gradient(#c3d0dc 0 8px, #c9d5e0 18px, #d7e3f0 19px);
  padding: 10px 7px 7px;
`;
const LocHead = styled.div`
  height: 20px;
  display: flex;
  justify-content: space-between;
  padding-right: 3px;
  color: #8f979f;
  font: 12px/18px ${GRID};
  letter-spacing: -0.25px;
  b { width: 16px; height: 16px; background: #983034; color: #fff; text-align: center; font: 700 10px/14px ${GRID}; }
`;
const Scale = styled.div`
  position: absolute;
  left: 6px;
  bottom: 7px;
  display: flex;
  gap: 7px;
`;
const ScaleBar = styled.div<{ $w: number }>`
  width: ${(p) => p.$w}px;
  border-bottom: 3px solid #808080;
  font: 11px/15px "Liberation Sans", Arial, sans-serif;
  color: #222;
`;
const polys = ["1004.3,256.3 1199.5,243.5 1190,449.5 999.4,436.5", "1329.6,408 1677,623.5 1301.5,625.5", "868.5,610.4 1068.5,564.5 1142.5,834.3 932,926"];

/* ---------- status bar and taskbar ---------- */

const Status = styled.footer`
  height: 19px;
  background: #333;
  color: #fff;
  display: flex;
  justify-content: flex-end;
  font-size: 12px;
  line-height: 19px;
  letter-spacing: -0.3px;
`;
const StatusCell = styled.div<{ $w: number; $p?: number; $dim?: boolean }>`
  width: ${(p) => p.$w}px;
  height: 17px;
  margin-top: 2px;
  line-height: 18px;
  padding-left: ${(p) => p.$p ?? 3}px;
  white-space: nowrap;
  background: linear-gradient(90deg, #4aa0e0 1px, #fff 1px) left / 2px 13px no-repeat;
  ${(p) => p.$dim && css`color: #808080;`}
`;
const Taskbar = styled.footer`
  height: 39px;
  background: #212121;
  display: flex;
`;
const Task = styled.div<{ $run?: boolean; $active?: boolean }>`
  width: 49px;
  display: flex;
  align-items: center;
  justify-content: center;
  &:first-child { width: 46px; }
  ${(p) => p.$run && css`background: linear-gradient(#76b9ed, #76b9ed) 6px 38px / 40px 1px no-repeat;`}
  ${(p) => p.$active && css`background: linear-gradient(#76b9ed, #76b9ed) 2px 38px / 47px 1px no-repeat, linear-gradient(90deg, #4d4b4c 44px, #2b2b2b 44px 45px, #3b3a3a 45px) 2px 0 no-repeat;`}
`;
const ClockBox = styled.div`
  margin-left: auto;
  width: 70px;
  color: #fff;
  font-size: 11.500px;
  letter-spacing: -0.35px;
  line-height: 18px;
  padding: 2px 4px 0 0;
  white-space: nowrap;
  display: flex;
  flex-direction: column;
  align-items: flex-end;
  span:first-child { padding-right: 16px; }
`;

const Letter = ({ x, y, s, children }: { x: number; y: number; s: number; children: string }) => (
  <text x={x} y={y} fontSize={s} fontWeight="700" fill="#fff" textAnchor="middle" fontFamily="Open Sans, sans-serif">{children}</text>
);
const tasks: React.ReactNode[] = [
  <path d="M4 6.500l6.500-1v6H4zM11.500 5.300L20 4v7.500h-8.500zM4 12.500h6.500v6L4 17.500zM11.500 12.500H20V20l-8.500-1.300z" fill="#fff" />,
  <><circle cx="14.500" cy="9.500" r="5.200" fill="none" stroke="#fff" strokeWidth="1.300" /><path d="M11 13l-7 7" stroke="#fff" strokeWidth="1.500" /></>,
  <path d="M4 4v3h10V4M4 20v-3h10v3M4.500 9h9v6h-9zM18 4v5M18 13v7M17 10.500h2.500" stroke="#fff" strokeWidth="1.300" fill="none" />,
  <><defs><linearGradient id="a" x1="0" y1="0" x2=".6" y2="1"><stop offset="0" stopColor="#ffc080" /><stop offset=".45" stopColor="#f5586a" /><stop offset=".6" stopColor="#b580e0" /><stop offset="1" stopColor="#62a8f0" /></linearGradient></defs><rect width="24" height="24" rx="5" fill="url(#a)" /><path d="M12 4.500l7.500 7.500-7.500 7.500L4.500 12z" fill="none" stroke="#fff" strokeWidth="1.800" /><path d="M8 12h8M12 6v12M9.500 9.500v5M14.500 9.500v5" fill="none" stroke="#fff" strokeWidth="1.200" /></>,
  <><path d="M6 1h18v22H6z" fill="#c07ad4" /><path d="M19 17h5v6h-5z" fill="#7a1c7c" /><path d="M18 1h6v16h-6z" fill="#b96bd0" /><path d="M0 6h12v12H0z" fill="#7a1878" /><Letter x={6} y={15.500} s={10}>N</Letter></>,
  <><circle cx="12" cy="12" r="12" fill="#0d6cbf" /><path d="M1 8C4-2 21-3 24 10c0 6-6 7-9 4 3-6-8-10-14-6z" fill="#38b6e8" /><path d="M15 1c6 2 10 7 9 11-1 4-7 4-9 2 2-3 2-8 0-13z" fill="#56c850" /><path d="M11 10c-4 5 0 11 9 10-4 5-13 4-15-3-1-4 2-8 6-7z" fill="#0b3f8c" /><path d="M12 11c-1 4 3 7 9 5l3-1v5h-4c-6 1-10-5-8-9z" fill="#212121" /></>,
  <><circle cx="12" cy="12" r="11" fill="#f6c12c" /><path d="M12 12L2.500 6.500A11 11 0 0 1 21.500 6.500H12z" fill="#dd4b39" /><path d="M12 12l-9.500-5.500A11 11 0 0 0 11 23l5-9z" fill="#1da462" /><circle cx="12" cy="12" r="5.200" fill="#fff" /><circle cx="12" cy="12" r="4.200" fill="#4a8af4" /></>,
  <><path d="M7 1h16v11H7z" fill="#1490df" /><path d="M13 1h5v6h-5z" fill="#50c8f4" /><path d="M18 1h5v6h-5z" fill="#9be0fa" /><path d="M6 12l9 4 9-4v10H6z" fill="#1a9be4" /><path d="M24 12v10L14 16z" fill="#36b8f0" /><path d="M0 6h12v12H0z" fill="#0a6cc0" /><Letter x={6} y={15.500} s={10}>O</Letter></>,
  <><path d="M1 3h9l2 2h11v16H1z" fill="#f0a82c" /><path d="M1 7h22v14H1z" fill="#fcc464" /><path d="M5 21v-8h14v8h-4v-4H9v4z" fill="#3f8fdc" /></>,
  <><circle cx="12" cy="13" r="10.500" fill="#ff9a2c" /><path d="M2 10c0 10 6 14 11 13 7 0 11-6 10-12-2 7-6 8-10 8S4 15 2 10z" fill="#f8384c" /><path d="M14 0c1 5 9 6 9 13 0 3-3 6-5 6 2-7-6-9-4-19z" fill="#fddc3c" /><path d="M2 11l2-7 4 4z" fill="#ffb030" /><circle cx="12" cy="12" r="4.500" fill="#8468d0" /><path d="M6 9c3-1 4 1 7 1l-3 3z" fill="#fb8c2c" /></>,
  <><circle cx="13" cy="4" r="3.500" fill="#7b83eb" /><circle cx="20.500" cy="5.500" r="2.500" fill="#4f78d0" /><path d="M9 8h9v13c-6 2-9-2-9-5zM17 8h7v7c0 4-5 5-7 3z" fill="#6a80dc" /><path d="M0 6h12v12H0z" fill="#3c6ab8" /><Letter x={6} y={15.500} s={10}>T</Letter><circle cx="19.500" cy="19.500" r="4.700" fill="#8a9a1c" stroke="#fff" /><path d="M17 19.500l2 2 3-4" stroke="#fff" strokeWidth="1.300" fill="none" /></>,
  <><circle cx="12" cy="12" r="11" fill="#fff" /><g strokeWidth="3" strokeLinecap="round"><path d="M10 5.500v.1M5.500 9.500h4.500" stroke="#36a4e8" /><path d="M14.300 5.500v4.300M18.300 10h.1" stroke="#2eb67d" /><path d="M9.700 14.500v4M5.500 14.300h.1" stroke="#e01e5a" /><path d="M14.200 14.300h4.300M14.200 18.500v.1" stroke="#ecb22e" /></g></>,
  <><path d="M6 1h18v22H6z" fill="#1f9a58" /><path d="M15 1h9v6h-9z" fill="#30c060" /><path d="M6 12h18v6H6z" fill="#187c48" /><path d="M6 17h18v6H6z" fill="#185c38" /><path d="M0 6h12v12H0z" fill="#12793f" /><Letter x={6} y={15.500} s={10}>X</Letter></>,
  <g transform="scale(1.5)">{icons.drop}</g>,
  <><path d="M17 0l7 3v18l-7 3L7 14l-5 4-2-2 4-4-4-4 2-2 5 4zM18 7l-6 5 6 5z" fill="#1a86d8" fillRule="evenodd" /><path d="M18 0l6 3v18l-6 3z" fill="#27a8f0" /></>,
  <><path d="M.5 3.500h23v13H.5z" fill="#fff" stroke="#9a9a9a" /><path d="M9.500 17h5v3H18v1.500H6V20h3.500z" fill="#8a8a8a" /><path d="M10 7v2.500M14 7v2.500M9.500 12c1 1.800 4 1.800 5 0" stroke="#444" fill="none" /></>,
];

export default function App() {
  return (
    <Screen>
      <Global />
      <TitleBar>
        <Icon name="drop" size={14} />
        <span>InfoWorks ICM + InfoAsset Manager [2021.5.0] - [GeoPlan - Model network [Target]]</span>
        <WinButtons $gap={36}>
          <svg width="10" height="10"><path d="M0 5.500h10" stroke="#777" /></svg>
          <svg width="10" height="10"><path d="M.5 2.500h7v7h-7zM2.500 2V.500h7v7H8" stroke="#777" fill="none" /></svg>
          <svg width="10" height="10"><path d="M.5.500l9 9M9.500.500l-9 9" stroke="#777" /></svg>
        </WinButtons>
      </TitleBar>
      <MenuBar>
        <Icon name="geoplan" size={15} />
        {menus.map(([m, w]) => <MenuItem key={m} $w={w}><u>{m[0]}</u>{m.slice(1)}</MenuItem>)}
        <WinButtons $gap={10}>
          <svg width="7" height="9"><path d="M1 7.500h5" stroke="#000" strokeWidth="1.600" /></svg>
          <svg width="8" height="9"><path d="M.6 3.500h5v5h-5zM2.500 3V1h5v5H6" stroke="#000" fill="none" strokeWidth="1.200" /></svg>
          <svg width="7" height="9"><path d="M.5 1.500l6 6M6.500 1.500l-6 6" stroke="#000" strokeWidth="1.500" /></svg>
        </WinButtons>
      </MenuBar>
      <Tools>
        <Toolbar items={row1} />
        <Toolbar items={row2} />
        <Toolbar items={row3} />
      </Tools>
      <Work>
        <Side>
          <SideMain>
            <PanelHead>
              <Grip $w={6.5} />
              <b>Properties</b>
              <svg width="9" height="9"><path d="M.5.500h8v8h-8z" fill="none" stroke="#777" /></svg>
              <svg width="9" height="9"><path d="M1 1l7 7M8 1L1 8" stroke="#000" strokeWidth="1.500" /></svg>
            </PanelHead>
            <ObjectSelect>Subcatchment : C : Model network<Chevron w={11} t={1} c="#555" /></ObjectSelect>
            <PanelTools>
              <ToolGap $r={8}><Icon name="prev" size={15} /></ToolGap>
              <ToolGap $r={6}><Icon name="next" size={15} /></ToolGap>
              <ToolGap $r={4}><Icon name="compass" size={15} /><Caret $w={15} /></ToolGap>
              <ToolGap $r={7}><Icon name="point" size={15} /></ToolGap>
              <ToolGap $r={8}><Icon name="notes" size={15} /></ToolGap>
              <ToolGap $r={6}><Icon name="graph" size={15} /></ToolGap>
              <ToolGap $r={2}><Icon name="film" size={15} /><Caret $w={15} /></ToolGap>
              <ToolGap $r={2}><Icon name="infoCube" size={15} /><Caret $w={15} /></ToolGap>
              <ToolGap $r={2}><Icon name="wrench" size={15} /><Caret $w={15} /></ToolGap>
              <ToolGap $r={0}><Icon name="help" size={15} /><Caret $w={15} /></ToolGap>
            </PanelTools>
            <SubHead>
              <b>Subcatchment Object Properties<IBeam /></b>
              <span><svg width="9" height="9"><path d="M1 1l6 7M7.500 1L1 8" stroke="#777" strokeWidth="1.800" /></svg></span>
            </SubHead>
            <GridWrap>
              <Rows>
                {sections.map((s) => (
                  <div key={s.title}>
                    <Section><i data-closed={!!s.closed} />{s.title}</Section>
                    {s.rows?.map((r, i, all) => <Property key={r[0]} r={r} first={i === 0} last={i === all.length - 1} />)}
                  </div>
                ))}
              </Rows>
              <Scroll>
                <svg width="15" height="17"><path d="M4 11l3.500-4L11 11" stroke="#5a5a52" strokeWidth="1.800" fill="none" /></svg>
                <i />
                <div />
                <svg width="15" height="17"><path d="M4 7l3.500 4L11 7" stroke="#5a5a52" strokeWidth="1.800" fill="none" /></svg>
              </Scroll>
            </GridWrap>
          </SideMain>
          <TabsLine>
            <BottomTab $w={106}>Master Database</BottomTab>
            <BottomTab $w={71} $on>Properties</BottomTab>
            <BottomTab $w={84}>Job Progress</BottomTab>
            <Tick $h={14} $t={3} />
          </TabsLine>
        </Side>
        <Mdi>
          <DocTabs>
            <DocTab $on $w={104} $gap={3}><Icon name="geoplan" size={14} />Model network</DocTab>
            <DocTab $w={174} $gap={3}><Icon name="sudsGrid" size={16} />SUDS control-Model network</DocTab>
            <Tick $h={13} $t={3} />
          </DocTabs>
          <Canvas>
            <svg width="1521" height="860" viewBox="390 153 1521 860">
              {polys.map((p) => <polygon key={p} points={p} fill="#bfbf7f" stroke="#8a8a12" strokeWidth="1" />)}
              <g stroke="#808000" strokeWidth="2.800" fill="none">
                <path d="M1097.500 347.500l77 202M1003 733.300l171.500-183.800 262 3" />
                <path d="M1125.700 445.500l12.600 8.500 3.700-14.500M1311 542.700l-12 8 12 8M1078.500 641.500l14.800-4.800-2.600 14.800" strokeWidth="2.600" />
              </g>
              <path d="M1175 552l21.300 107M1181.700 600.700l4.300 4 2.700-4.500M1181.700 604.500l4.500 5 2.700-5" stroke="#2ecc2e" fill="none" />
              <circle cx="1174.600" cy="549.500" r="4.500" fill="#808000" />
              <circle cx="1196.400" cy="659.400" r="4" fill="none" stroke="#808000" />
              <g fontFamily="DejaVu Sans, sans-serif" fontWeight="700" fontSize="9.500">
                <text x="1175.500" y="561">1</text>
                <text x="1197.500" y="671">2</text>
              </g>
              <path d="M1101.500 499.500v16l3.700-3.500 2.800 6 2.500-1.300-2.700-5.500h4.700z" fill="#fff" stroke="#222" />
            </svg>
            <Locator>
              <LocHead>Locator<b>x</b></LocHead>
              <svg width="84" height="41">
                <path d="M0 0h84v41H0z" fill="#fff" />
                <path d="M21.500.500h10l-.5 12-9.500-1zM37.500 10l17 12.500-18 .5zM15 21.500l10-2.500 4 16-11 5.500z" fill="#c3c3c8" stroke="#8d8d92" />
                <path d="M29 18l2 6" stroke="#aaa" />
                <path d="M65 0v41" stroke="#f00000" strokeWidth="2" />
              </svg>
            </Locator>
            <Scale>
              <ScaleBar $w={125}>250 m</ScaleBar>
              <ScaleBar $w={191}>1250 ft</ScaleBar>
            </Scale>
          </Canvas>
        </Mdi>
      </Work>
      <Status>
        <StatusCell $w={191}>-1207, 204</StatusCell>
        <StatusCell $w={214}>Zoom (m): 1696.33 [1:7446]</StatusCell>
        <StatusCell $w={98} />
        <StatusCell $w={37} $p={4}>R/W</StatusCell>
        <StatusCell $w={31} $p={5} $dim>R/W</StatusCell>
        <StatusCell $w={36} $p={5}>NUM</StatusCell>
        <StatusCell $w={34} $p={5} $dim>SCRL</StatusCell>
      </Status>
      <Taskbar>
        {tasks.map((t, i) => (
          <Task key={i} $run={i > 6} $active={i === 15}>
            <svg width={24} height={24} viewBox="0 0 24 24">{t}</svg>
          </Task>
        ))}
        <ClockBox><span>16:11</span><span>28/09/2021</span></ClockBox>
      </Taskbar>
    </Screen>
  );
}
